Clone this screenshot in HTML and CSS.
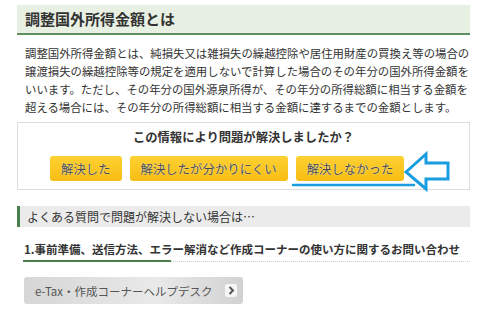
FILE: index.html
```html
<!DOCTYPE html>
<html lang="ja">
<head>
    <meta charset="UTF-8">
    <meta name="viewport" content="width=device-width, initial-scale=1.0">
    <title>調整国外所得金額とは</title>
    <link rel="stylesheet" href="styles.css">
</head>
<body>
    <div class="page">
        <h1 class="page-title">調整国外所得金額とは</h1>
        <p class="lead">調整国外所得金額とは、純損失又は雑損失の繰越控除や居住用財産の買換え等の場合の譲渡損失の繰越控除等の規定を適用しないで計算した場合のその年分の国外所得金額をいいます。ただし、その年分の国外源泉所得が、その年分の所得総額に相当する金額を超える場合には、その年分の所得総額に相当する金額に達するまでの金額とします。</p>

        <div class="feedback">
            <p class="feedback-question">この情報により問題が解決しましたか？</p>
            <div class="feedback-buttons">
                <button type="button" class="btn-yellow">解決した</button>
                <button type="button" class="btn-yellow">解決したが分かりにくい</button>
                <button type="button" class="btn-yellow">解決しなかった</button>
            </div>
            <!-- 注釈（矢印と下線） -->
            <svg class="annotation" width="160" height="42" viewBox="0 0 160 42">
                <line x1="2" y1="35" x2="123" y2="35" stroke="#1a9de0" stroke-width="2.5" stroke-linecap="round"/>
                <polygon points="115,22 135,4 135,13 157,13 157,29 135,29 135,39" fill="none" stroke="#1a9de0" stroke-width="3" stroke-linejoin="miter"/>
            </svg>
        </div>

        <h2 class="section-title">よくある質問で問題が解決しない場合は…</h2>
        <h3 class="faq-title">1.事前準備、送信方法、エラー解消など作成コーナーの使い方に関するお問い合わせ</h3>

        <a class="btn-gray" href="#">
            <span>e-Tax・作成コーナーヘルプデスク</span>
            <span class="chevron">
                <svg width="12" height="13" viewBox="0 0 12 13"><path d="M4.5 3 L8 6.5 L4.5 10" fill="none" stroke="#555" stroke-width="2"/></svg>
            </span>
        </a>
    </div>
</body>
</html>
```

FILE: styles.css
```css
body {
    margin: 0;
    font-family: "Noto Sans CJK JP", "Noto Sans", sans-serif;
    color: #333;
    background: #fff;
}
.page {
    padding: 5px 10px 0 17px;
}
.page-title {
    margin: 0;
    height: 28px;
    line-height: 28px;
    padding: 0 8px;
    font-size: 15px;
    font-weight: bold;
    background-color: #e8f0e4;
    border-bottom: 2px solid #5e8f5e;
}
.lead {
    margin: 9px 0 0;
    padding: 0 0 0 8px;
    font-size: 11.4px;
    line-height: 18px;
}
.feedback {
    position: relative;
    margin-top: 6px;
    border: 1px solid #ddd;
    padding: 5px 0 8px;
}
.feedback-question {
    margin: 0;
    text-align: center;
    font-size: 12.3px;
    font-weight: bold;
    line-height: 18px;
}
.feedback-buttons {
    display: flex;
    gap: 8px;
    margin-top: 10px;
    padding-left: 32px;
}
.btn-yellow {
    height: 25px;
    padding: 0 11px;
    border: none;
    border-radius: 3px;
    background: linear-gradient(#fdd133, #f8bd12);
    color: #4a4a4a;
    font-family: inherit;
    font-size: 12.4px;
    text-shadow: 0 0 1px #fff;
    cursor: pointer;
}
.annotation {
    position: absolute;
    left: 273px;
    top: 27px;
}
.section-title {
    margin: 16px 0 0;
    height: 21px;
    line-height: 21px;
    padding-left: 7px;
    font-size: 12px;
    font-weight: normal;
    background-color: #ebebeb;
    border-left: 3px solid #4b7f4b;
}
.faq-title {
    position: relative;
    margin: 13px 0 0 6px;
    padding: 0 0 3px 1px;
    font-size: 11.5px;
    font-weight: bold;
    line-height: 18px;
    border-bottom: 1px dotted #ccc;
}
.faq-title::after {
    content: "";
    position: absolute;
    left: 0;
    bottom: -1px;
    width: 148px;
    height: 2px;
    background-color: #4b7f4b;
}
.btn-gray {
    display: inline-flex;
    align-items: center;
    gap: 12px;
    margin: 15px 0 0 7px;
    height: 27px;
    padding: 0 6px 0 11px;
    border-radius: 3px;
    background: linear-gradient(to right, #d6d6d6, #e9e9e9 60%, #d2d2d2);
    color: #555;
    font-size: 11.5px;
    text-decoration: none;
}
.chevron {
    display: flex;
    width: 12px;
    height: 13px;
    background-color: #f6f6f6;
    border-radius: 2px;
}
```
